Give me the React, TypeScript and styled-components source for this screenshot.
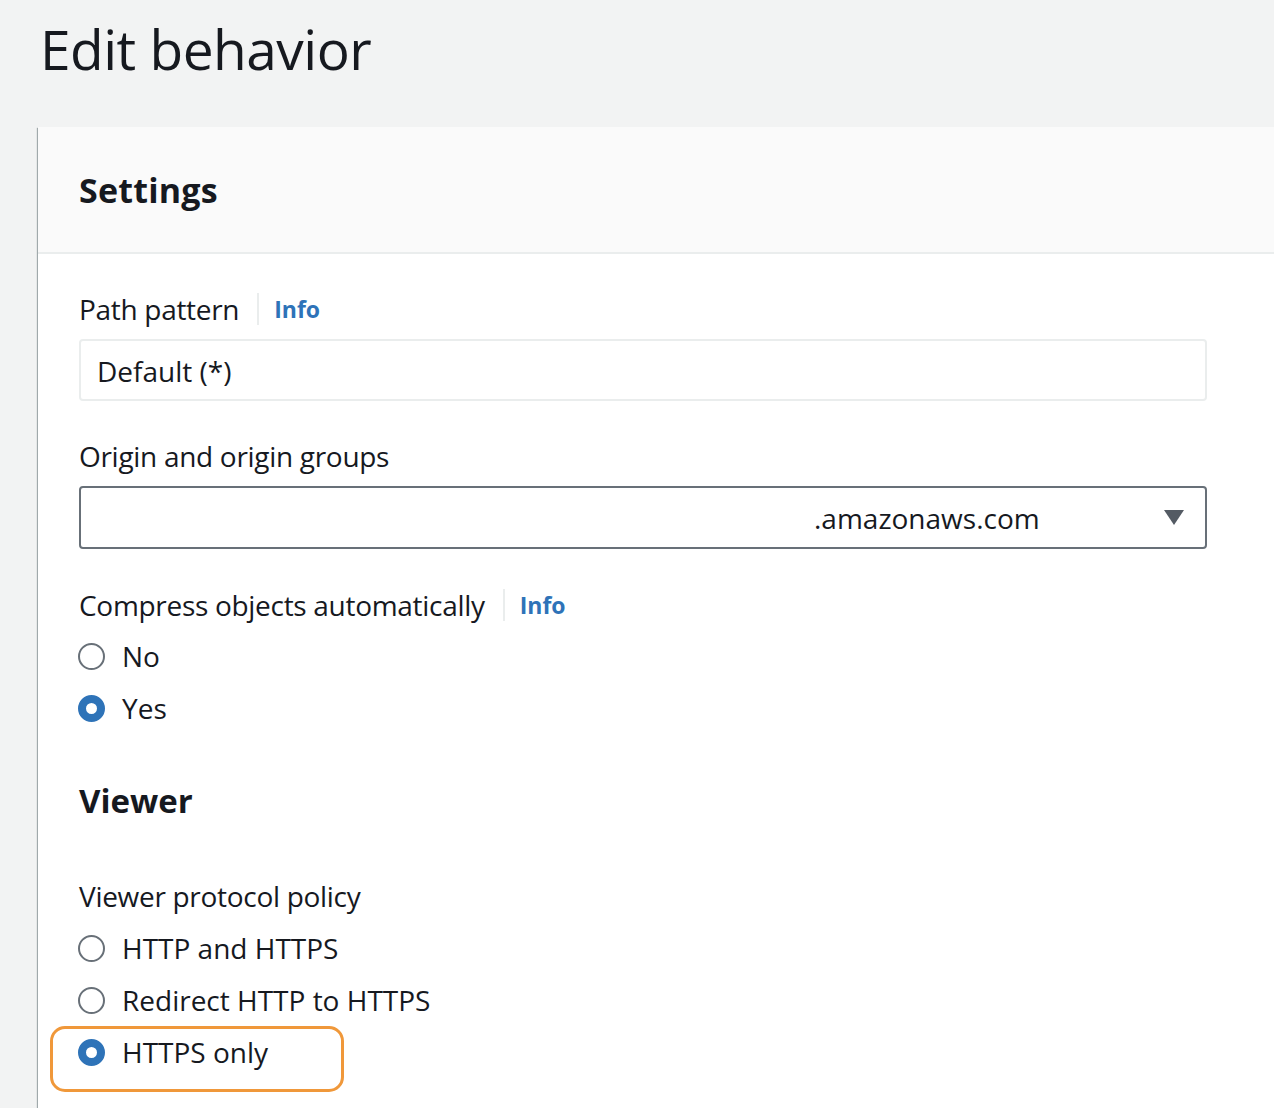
import React from "react";
import styled, { createGlobalStyle } from "styled-components";

const Global = createGlobalStyle`
  html, body { margin: 0; padding: 0; }
  body {
    background: #f2f3f3;
    font-family: "Open Sans", "Noto Sans", Arial, sans-serif;
    color: #16191f;
    overflow: hidden;
  }
`;

const Page = styled.div`
  width: 1274px;
  height: 1108px;
  overflow: hidden;
  padding: 13px 0 0 40px;
  box-sizing: border-box;
`;

const Title = styled.h1`
  margin: 0;
  font-size: 55px;
  line-height: 72px;
  font-weight: 400;
  letter-spacing: -0.5px;
`;

const Card = styled.section`
  margin: 42px 0 0 -2px;
  width: 1300px;
  background: #ffffff;
  box-shadow: 0 1px 1px 0 rgba(0, 28, 36, 0.3), 1px 1px 1px 0 rgba(0, 28, 36, 0.15),
    -1px 1px 1px 0 rgba(0, 28, 36, 0.3);
  min-height: 1100px;
`;

const CardHeader = styled.header`
  height: 127px;
  box-sizing: border-box;
  background: #fafafa;
  border-bottom: 2px solid #eaeded;
  padding-left: 41px;
  display: flex;
  align-items: center;
`;

const CardTitle = styled.h2`
  margin: 0;
  font-size: 34px;
  font-weight: 700;
  line-height: 40px;
  letter-spacing: 0.2px;
`;

const CardBody = styled.div`
  padding: 35px 0 0 41px;
  width: 1128px;
`;

const Field = styled.div<{ $mt?: number }>`
  margin-top: ${(p) => p.$mt ?? 0}px;
  display: flex;
  flex-direction: column;
`;

const LabelRow = styled.div`
  display: flex;
  align-items: center;
  height: 40px;
`;

const Label = styled.span`
  font-size: 28px;
  line-height: 40px;
  letter-spacing: -0.3px;
`;

const InfoLink = styled.a`
  margin-left: 18px;
  padding-left: 15px;
  border-left: 2px solid #eaeded;
  color: #2e73b8;
  font-weight: 700;
  font-size: 23px;
  line-height: 32px;
  text-decoration: none;
`;

const TextInput = styled.div`
  margin-top: 10px;
  height: 62px;
  box-sizing: border-box;
  border: 2px solid #eaeded;
  border-radius: 4px;
  background: #ffffff;
  padding: 0 16px;
  display: flex;
  align-items: center;
  font-size: 28px;
  padding-top: 2px;
`;

const Select = styled.div`
  margin-top: 10px;
  height: 63px;
  box-sizing: border-box;
  border: 2px solid #687078;
  border-radius: 4px;
  background: #ffffff;
  padding: 0 21px 0 16px;
  display: flex;
  align-items: center;
  font-size: 28px;
`;

const Redacted = styled.span`
  display: inline-block;
  width: 717px;
  height: 30px;
  background: #ffffff;
`;

const SelectText = styled.span`
  flex: 1;
`;

const RadioGroup = styled.div<{ $mt?: number }>`
  margin-top: ${(p) => p.$mt ?? 5}px;
  display: flex;
  flex-direction: column;
`;

const RadioRow = styled.label`
  position: relative;
  height: 52px;
  display: flex;
  align-items: center;
  font-size: 28px;
`;

const RadioCircle = styled.span<{ $checked?: boolean }>`
  width: 27px;
  height: 27px;
  box-sizing: border-box;
  border-radius: 50%;
  flex: none;
  border: ${(p) => (p.$checked ? "8px solid #2e73b8" : "2.5px solid #687078")};
  background: #ffffff;
  margin-right: 17px;
  margin-left: -1px;
`;

const Highlight = styled.span`
  position: absolute;
  left: -29px;
  top: 0;
  width: 294px;
  height: 66px;
  box-sizing: border-box;
  border: 3px solid #f0983a;
  border-radius: 15px;
  pointer-events: none;
`;

const SectionTitle = styled.h3`
  margin: 47px 0 0;
  font-size: 33px;
  font-weight: 700;
  line-height: 40px;
`;

const Caret = () => (
  <svg width="20" height="15" viewBox="0 0 20 15" aria-hidden="true">
    <path d="M0 0 H20 L10 15 Z" fill="#545b64" />
  </svg>
);

const Radio = ({ label, checked, highlight }: { label: string; checked?: boolean; highlight?: boolean }) => (
  <RadioRow>
    <RadioCircle $checked={checked} />
    {label}
    {highlight && <Highlight />}
  </RadioRow>
);

export default function App() {
  return (
    <>
      <Global />
      <Page>
        <Title>Edit behavior</Title>
        <Card>
          <CardHeader>
            <CardTitle>Settings</CardTitle>
          </CardHeader>
          <CardBody>
            <Field>
              <LabelRow>
                <Label>Path pattern</Label>
                <InfoLink>Info</InfoLink>
              </LabelRow>
              <TextInput>Default (*)</TextInput>
            </Field>
            <Field $mt={35}>
              <LabelRow>
                <Label>Origin and origin groups</Label>
              </LabelRow>
              <Select>
                <Redacted />
                <SelectText>.amazonaws.com</SelectText>
                <Caret />
              </Select>
            </Field>
            <Field $mt={36}>
              <LabelRow>
                <Label>Compress objects automatically</Label>
                <InfoLink>Info</InfoLink>
              </LabelRow>
              <RadioGroup>
                <Radio label="No" />
                <Radio label="Yes" checked />
              </RadioGroup>
            </Field>
            <SectionTitle>Viewer</SectionTitle>
            <Field $mt={55}>
              <LabelRow>
                <Label>Viewer protocol policy</Label>
              </LabelRow>
              <RadioGroup $mt={6}>
                <Radio label="HTTP and HTTPS" />
                <Radio label="Redirect HTTP to HTTPS" />
                <Radio label="HTTPS only" checked highlight />
              </RadioGroup>
            </Field>
          </CardBody>
        </Card>
      </Page>
    </>
  );
}
